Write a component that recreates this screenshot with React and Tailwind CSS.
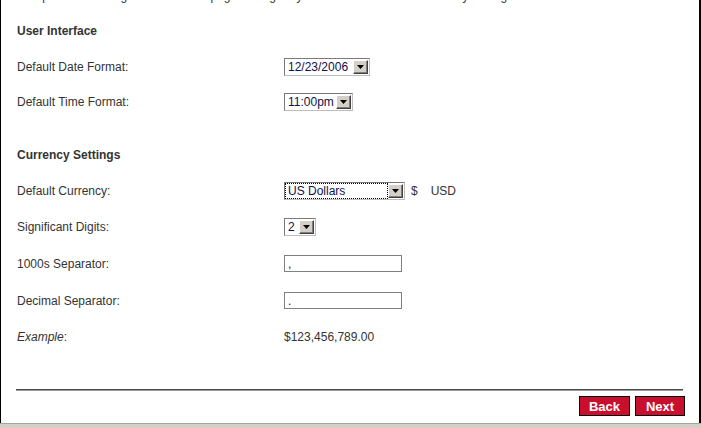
import React from 'react'

const font = { fontFamily: '"Liberation Sans", Arial, sans-serif' }

function Arrow() {
  return (
    <div className="flex h-[14px] w-[15px] items-center justify-center border border-t-white border-l-white border-b-[#404040] border-r-[#404040] bg-[#d4d0c8] shadow-[inset_-1px_-1px_0_#808080]">
      <svg width="7" height="4" viewBox="0 0 7 4">
        <path d="M0 0h7L3.5 4z" fill="#000" />
      </svg>
    </div>
  )
}

function Select({ width, value, focus }) {
  return (
    <div
      className="flex h-[18px] items-center border border-t-[#7a7a7a] border-l-[#7a7a7a] border-b-[#bdbdbd] border-r-[#bdbdbd] bg-white pr-[1px]"
      style={{ width }}
    >
      <div
        className={`flex h-[14px] flex-1 items-center pl-[2px] text-[12px] leading-none text-[#10104a] ${focus ? 'mx-[1px] outline outline-1 outline-dotted outline-black' : 'ml-[1px]'}`}
      >
        {value}
      </div>
      <Arrow />
    </div>
  )
}

function TextInput({ value }) {
  return (
    <div className="flex h-[17px] w-[118px] items-center border border-[#7f7f7f] bg-white pl-[3px] text-[12px] leading-none text-[#222]">
      {value}
    </div>
  )
}

function Row({ label, h, children }) {
  return (
    <div className="flex items-center" style={{ height: h }}>
      <div className="w-[267px] text-[12px] text-[#333]">{label}</div>
      <div className="flex items-center">{children}</div>
    </div>
  )
}

export default function App() {
  return (
    <div className="flex h-[428px] w-[701px] flex-col overflow-hidden bg-white" style={font}>
      <div className="flex flex-1 flex-col border-l border-r-2 border-l-black border-r-black">
        {/* clipped intro text */}
        <div className="h-[4px] overflow-hidden pl-[16px]">
          <div className="-mt-[11px] whitespace-nowrap text-[12px] leading-[14px] text-[#333]">
            Complete the settings below for this page: configure your user interface and currency settings.
          </div>
        </div>

        <div className="flex flex-col pl-[16px]">
          <div className="mt-[8px] flex h-[37px] items-center text-[12px] font-bold text-[#333]">User Interface</div>
          <Row label="Default Date Format:" h={35}>
            <Select width={86} value="12/23/2006" />
          </Row>
          <Row label="Default Time Format:" h={35}>
            <Select width={69} value="11:00pm" />
          </Row>

          <div className="mt-[18px] flex h-[36px] items-center text-[12px] font-bold text-[#333]">Currency Settings</div>
          <Row label="Default Currency:" h={35}>
            <Select width={121} value="US Dollars" focus />
            <span className="ml-[6px] text-[12px] text-[#333]">$</span>
            <span className="ml-[13px] text-[12px] text-[#333]">USD</span>
          </Row>
          <Row label="Significant Digits:" h={37}>
            <Select width={32} value="2" />
          </Row>
          <Row label="1000s Separator:" h={37}>
            <TextInput value="," />
          </Row>
          <Row label="Decimal Separator:" h={37}>
            <TextInput value="." />
          </Row>
          <Row label={<span><i>Example</i>:</span>} h={36}>
            <span className="text-[12px] text-[#333]">$123,456,789.00</span>
          </Row>
        </div>

        <div className="ml-[15px] mr-[16px] mt-[34px] border-t border-b border-t-[#4a4a4a] border-b-[#9a9a9a]" />

        <div className="mr-[14px] mt-[5px] flex justify-end gap-[5px]">
          <button className="h-[20px] w-[51px] border border-black bg-[#c8102e] text-[13px] font-bold leading-none text-white">
            Back
          </button>
          <button className="h-[20px] w-[50px] border border-black bg-[#c8102e] text-[13px] font-bold leading-none text-white">
            Next
          </button>
        </div>
      </div>
      <div className="h-[5px] border-t border-t-[#a8a49c] bg-[#d4d0c8]" />
    </div>
  )
}
